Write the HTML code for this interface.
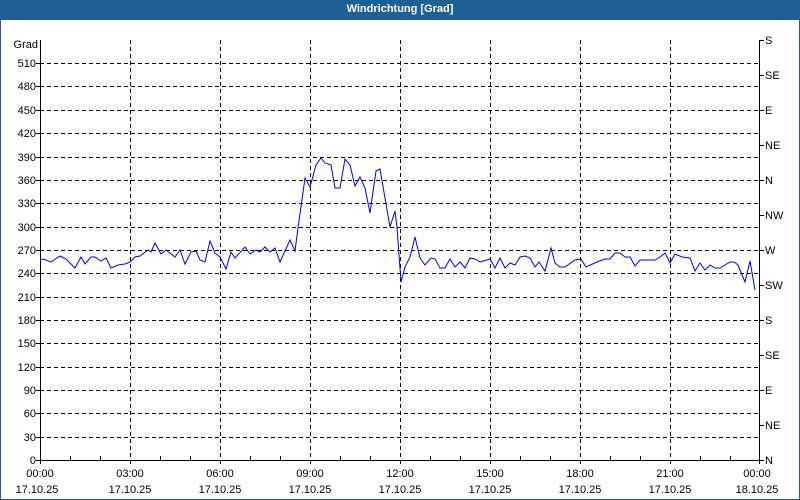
<!DOCTYPE html>
<html><head><meta charset="utf-8"><style>
html,body{margin:0;padding:0;background:#fff}
body{width:800px;height:500px;overflow:hidden;position:relative;font-family:"Liberation Sans",sans-serif}
.t{position:absolute;left:0;top:0;width:800px;height:20px;background:#1e5f96;color:#fff;font-weight:bold;font-size:11px;text-align:center;line-height:19px}
.b{position:absolute;left:0;top:20px;width:798px;height:479px;border:1px solid #1e5f96;border-top:none}
</style></head><body>
<div class="t">Windrichtung [Grad]</div>
<div class="b"></div>
<svg width="800" height="500" style="position:absolute;left:0;top:0" font-family="Liberation Sans, sans-serif" font-size="11" fill="#000">
<g stroke="#000" stroke-width="1" stroke-dasharray="4,3" shape-rendering="crispEdges">
<line x1="40" x2="760" y1="63.5" y2="63.5"/><line x1="40" x2="760" y1="86.5" y2="86.5"/><line x1="40" x2="760" y1="110.5" y2="110.5"/><line x1="40" x2="760" y1="133.5" y2="133.5"/><line x1="40" x2="760" y1="157.5" y2="157.5"/><line x1="40" x2="760" y1="180.5" y2="180.5"/><line x1="40" x2="760" y1="203.5" y2="203.5"/><line x1="40" x2="760" y1="227.5" y2="227.5"/><line x1="40" x2="760" y1="250.5" y2="250.5"/><line x1="40" x2="760" y1="273.5" y2="273.5"/><line x1="40" x2="760" y1="297.5" y2="297.5"/><line x1="40" x2="760" y1="320.5" y2="320.5"/><line x1="40" x2="760" y1="343.5" y2="343.5"/><line x1="40" x2="760" y1="367.5" y2="367.5"/><line x1="40" x2="760" y1="390.5" y2="390.5"/><line x1="40" x2="760" y1="413.5" y2="413.5"/><line x1="40" x2="760" y1="437.5" y2="437.5"/>
<line x1="130.5" x2="130.5" y1="40" y2="460"/><line x1="220.5" x2="220.5" y1="40" y2="460"/><line x1="310.5" x2="310.5" y1="40" y2="460"/><line x1="400.5" x2="400.5" y1="40" y2="460"/><line x1="490.5" x2="490.5" y1="40" y2="460"/><line x1="580.5" x2="580.5" y1="40" y2="460"/><line x1="670.5" x2="670.5" y1="40" y2="460"/>
</g>
<g stroke="#000" stroke-width="1" shape-rendering="crispEdges">
<line x1="40.5" x2="40.5" y1="40" y2="461"/><line x1="759.5" x2="759.5" y1="40" y2="461"/><line x1="40" x2="760" y1="460.5" y2="460.5"/>
<path d="M760 40.5h4M760 75.5h4M760 110.5h4M760 145.5h4M760 180.5h4M760 215.5h4M760 250.5h4M760 285.5h4M760 320.5h4M760 355.5h4M760 390.5h4M760 425.5h4M760 460.5h4"/>
<path d="M36 63.5h4M36 86.5h4M36 110.5h4M36 133.5h4M36 157.5h4M36 180.5h4M36 203.5h4M36 227.5h4M36 250.5h4M36 273.5h4M36 297.5h4M36 320.5h4M36 343.5h4M36 367.5h4M36 390.5h4M36 413.5h4M36 437.5h4M36 460.5h4"/>
<path d="M70.5 460v-4M100.5 460v-4M160.5 460v-4M190.5 460v-4M250.5 460v-4M280.5 460v-4M340.5 460v-4M370.5 460v-4M430.5 460v-4M460.5 460v-4M520.5 460v-4M550.5 460v-4M610.5 460v-4M640.5 460v-4M700.5 460v-4M730.5 460v-4M40.5 460v4M130.5 460v4M220.5 460v4M310.5 460v4M400.5 460v4M490.5 460v4M580.5 460v4M670.5 460v4M759.5 460v4"/>
</g>
<g text-anchor="end">
<text x="38" y="48">Grad</text>
<text x="36" y="67">510</text><text x="36" y="90">480</text><text x="36" y="114">450</text><text x="36" y="137">420</text><text x="36" y="161">390</text><text x="36" y="184">360</text><text x="36" y="207">330</text><text x="36" y="231">300</text><text x="36" y="254">270</text><text x="36" y="277">240</text><text x="36" y="301">210</text><text x="36" y="324">180</text><text x="36" y="347">150</text><text x="36" y="371">120</text><text x="36" y="394">90</text><text x="36" y="417">60</text><text x="36" y="441">30</text><text x="36" y="464">0</text>
</g>
<g>
<text x="765" y="44">S</text><text x="765" y="79">SE</text><text x="765" y="114">E</text><text x="765" y="149">NE</text><text x="765" y="184">N</text><text x="765" y="219">NW</text><text x="765" y="254">W</text><text x="765" y="289">SW</text><text x="765" y="324">S</text><text x="765" y="359">SE</text><text x="765" y="394">E</text><text x="765" y="429">NE</text><text x="765" y="464">N</text>
</g>
<g text-anchor="middle">
<text x="40" y="477">00:00</text><text x="130" y="477">03:00</text><text x="220" y="477">06:00</text><text x="310" y="477">09:00</text><text x="400" y="477">12:00</text><text x="490" y="477">15:00</text><text x="580" y="477">18:00</text><text x="670" y="477">21:00</text><text x="757" y="477">00:00</text>
<text x="37" y="493">17.10.25</text><text x="130" y="493">17.10.25</text><text x="220" y="493">17.10.25</text><text x="310" y="493">17.10.25</text><text x="400" y="493">17.10.25</text><text x="490" y="493">17.10.25</text><text x="580" y="493">17.10.25</text><text x="670" y="493">17.10.25</text><text x="757" y="493">18.10.25</text>
</g>
<polyline fill="none" stroke="#0000ee" stroke-width="1" points="40,260 43,259 51,262 60,256 66,259 75,268 81,257 85,264 91,257 95,257 101,261 106,258 111,268 118,265 125,264 130,262 135,257 140,256 148,250 151,252 155,243 161,254 166,250 175,257 180,250 185,264 191,252 196,251 200,260 205,262 210,241 215,253 220,257 226,269 231,252 235,258 245,247 250,254 256,250 260,252 265,247 270,252 275,248 280,262 290,240 295,251 298,228 305,178 310,187 316,165 321,158 325,163 331,165 335,188 340,188 345,159 350,165 355,186 360,177 365,188 370,213 376,171 380,169 390,227 395,211 397,227 401,282 405,267 410,257 415,237 420,258 425,265 431,258 435,259 440,268 445,268 450,259 455,267 460,262 465,268 470,258 475,259 480,262 490,259 495,268 500,258 505,268 510,263 515,265 520,257 525,256 530,258 535,267 539,262 545,271 551,248 555,263 560,267 565,267 575,260 581,259 586,267 597,262 605,259 610,259 615,253 620,253 625,257 630,257 635,266 640,260 655,260 660,257 665,253 670,263 675,254 682,257 690,258 695,271 700,263 705,270 710,265 715,268 720,268 725,265 730,262 734,262 738,265 745,282 750,261 755,290"/>
</svg>
</body></html>
